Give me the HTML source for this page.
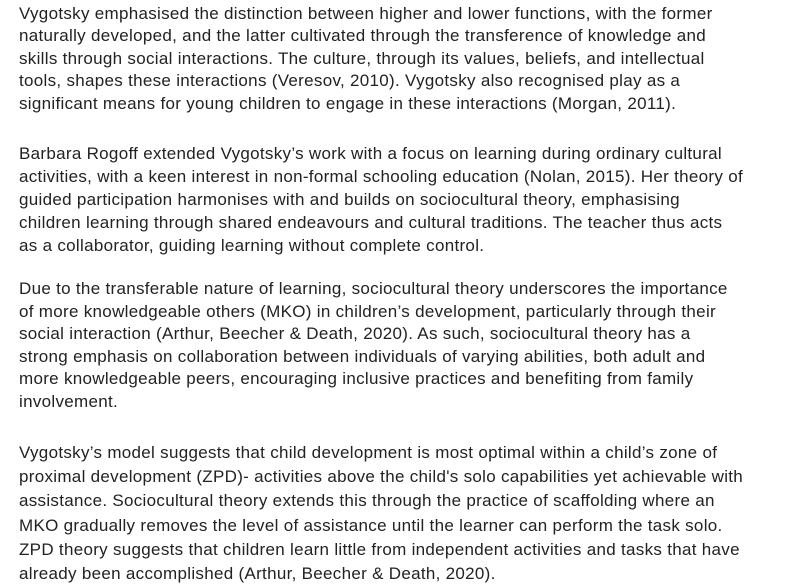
<!DOCTYPE html>
<html><head><meta charset="utf-8"><style>
html,body{margin:0;padding:0;background:#fff;}
body{width:804px;height:583px;overflow:hidden;position:relative;font-family:"Liberation Sans",Arial,sans-serif;font-size:17px;letter-spacing:0.3px;line-height:23px;color:#222;}
p{margin:0;position:absolute;left:19px;white-space:nowrap;}
</style></head><body>
<p style="top:2.5px;line-height:22.6px">Vygotsky emphasised the distinction between higher and lower functions, with the former<br>naturally developed, and the latter cultivated through the transference of knowledge and<br>skills through social interactions. The culture, through its values, beliefs, and intellectual<br>tools, shapes these interactions (Veresov, 2010). Vygotsky also recognised play as a<br>significant means for young children to engage in these interactions (Morgan, 2011).</p>
<p style="top:141.5px">Barbara Rogoff extended Vygotsky’s work with a focus on learning during ordinary cultural<br>activities, with a keen interest in non-formal schooling education (Nolan, 2015). Her theory of<br>guided participation harmonises with and builds on sociocultural theory, emphasising<br>children learning through shared endeavours and cultural traditions. The teacher thus acts<br>as a collaborator, guiding learning without complete control.</p>
<p style="top:278px;line-height:22.6px">Due to the transferable nature of learning, sociocultural theory underscores the importance<br>of more knowledgeable others (MKO) in children’s development, particularly through their<br>social interaction (Arthur, Beecher &amp; Death, 2020). As such, sociocultural theory has a<br>strong emphasis on collaboration between individuals of varying abilities, both adult and<br>more knowledgeable peers, encouraging inclusive practices and benefiting from family<br>involvement.</p>
<p style="top:441px;line-height:24.2px">Vygotsky’s model suggests that child development is most optimal within a child’s zone of<br>proximal development (ZPD)- activities above the child's solo capabilities yet achievable with<br>assistance. Sociocultural theory extends this through the practice of scaffolding where an<br>MKO gradually removes the level of assistance until the learner can perform the task solo.<br>ZPD theory suggests that children learn little from independent activities and tasks that have<br>already been accomplished (Arthur, Beecher &amp; Death, 2020).</p>
</body></html>
